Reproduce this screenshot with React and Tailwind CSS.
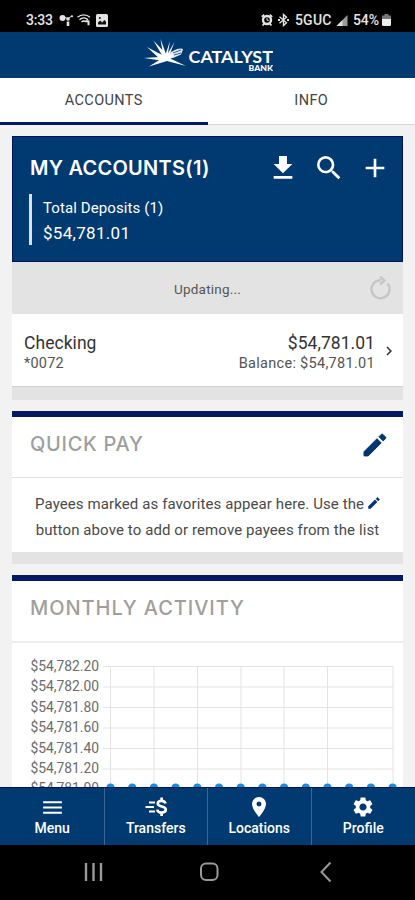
import React, { useState } from 'react';
import {
  MdAdd,
  MdChevronRight,
  MdFileDownload,
  MdLocationOn,
  MdMenu,
  MdSearch,
  MdSettings,
} from 'react-icons/md';

const gridRows = [
  { label: '$54,782.20', y: 23.5 },
  { label: '$54,782.00', y: 44 },
  { label: '$54,781.80', y: 64.5 },
  { label: '$54,781.60', y: 85 },
  { label: '$54,781.40', y: 105.5 },
  { label: '$54,781.20', y: 126 },
  { label: '$54,781.00', y: 146 },
];

const gridCols = [98.5, 142, 185.5, 229, 272, 315.5, 381];

const StatusBar = () => (
  <div className="h-8 shrink-0 bg-black text-[#e4e4e4] flex items-center justify-between pt-2 pl-[26px] pr-6">
    <div className="flex items-center">
      <span className="w-[27px] text-[14px] leading-4 font-medium tracking-[-0.2px]">
        3:33
      </span>
      <svg className="ml-1.5 w-3.5 h-3" viewBox="0 0 14 12" fill="currentColor">
        <circle cx="3.5" cy="4" r="3" />
        <circle cx="9" cy="5" r="1.8" />
        <circle cx="13" cy="2.2" r="1" />
        <path d="M6 3.5l3 1 4-2.6" stroke="currentColor" fill="none" />
        <rect x="7.7" y="7.5" width="2.6" height="4.5" />
      </svg>
      <svg
        className="ml-1 w-3.5 h-3"
        viewBox="0 0 14 12"
        fill="none"
        stroke="currentColor"
        strokeWidth="1.4"
      >
        <path d="M0.5 3.3C4 0 9.5 0 13 3.3M2.5 5.7C5 3.3 8.5 3.3 11 5.7M4.5 8c1.5-1.4 3-1.4 4.4 0" />
        <path d="M8.5 7l3 .4v3.8" strokeWidth="2" />
      </svg>
      <svg className="ml-[5px] w-3 h-[13px]" viewBox="0 0 12 13">
        <rect width="12" height="13" rx="1.5" fill="currentColor" />
        <path d="M2 10.5V8.6l2.2-2 2 1.8L8.4 6 10 7.8v2.7z" fill="#111" />
        <circle cx="3.8" cy="4" r="1" fill="#111" />
      </svg>
    </div>
    <div className="flex items-center">
      <svg
        className="w-3 h-3.5"
        viewBox="0 0 12 14"
        fill="none"
        stroke="currentColor"
      >
        <circle cx="6" cy="7" r="4" strokeWidth="2.4" />
        <path
          d="M.8 3.8L3.2 1.6M11.2 3.8L8.8 1.6M1.6 12.5l1.6-1.8M10.4 12.5l-1.6-1.8"
          strokeWidth="1.8"
        />
        <path d="M6 5v2.3h1.8" strokeWidth="1" />
      </svg>
      <svg
        className="ml-[5px] w-[11px] h-3.5"
        viewBox="0 0 11 14"
        fill="none"
        stroke="currentColor"
        strokeWidth="1.4"
      >
        <path d="M1.5 3.8l7 6-3 2.7v-11l3 2.7-7 6" />
        <path d="M0 7h2M9 7h2" strokeWidth="1.8" />
      </svg>
      <span className="ml-[6px] w-[38px] whitespace-nowrap text-[14px] leading-4 font-medium [word-spacing:-3px]">
        5G UC
      </span>
      <svg className="ml-[3px] w-3 h-[11px]" viewBox="0 0 11 11">
        <path d="M11 0v11H0z" fill="#999" />
        <path d="M6 5v6H0z" fill="#ddd" />
      </svg>
      <span className="ml-[5px] w-[27px] text-[14px] leading-4 font-medium tracking-[-0.1px]">
        54%
      </span>
      <svg className="ml-0.5 w-[9px] h-3" viewBox="0 0 9 12">
        <path d="M2.5 0h4v1.5H9V6H0V1.5h2.5z" fill="#777" />
        <path d="M0 5h9v5.5Q9 12 7.5 12h-6Q0 12 0 10.5z" fill="#eee" />
      </svg>
    </div>
  </div>
);

const Header = () => (
  <header className="h-[46px] shrink-0 bg-[#003a70] flex justify-center">
    <svg className="w-[130px] h-[46px]" viewBox="0 0 130 46">
      <g fill="#fff">
        <path d="M1 26l22-1.5L43 34l-19-5L6 34.5l10-6.2z" />
        <path d="M4 15l17 9-3 4zM10.5 8.5L24 23l-4 2zM17.5 7l5.5 15h-3zM27 9l-2.5 15H22zM31.5 10L26 24l-2-1z" />
        <path d="M24 23q5-4 9-5.5q6-2 7 0l-2 5-8 3.5-8 1z" opacity=".9" />
        <path d="M17 23h13l-4 6h-9z" />
      </g>
      <path d="M30 21l8-3M31 23l7-2" stroke="#003a70" strokeWidth=".8" />
      <text
        x="45.5"
        y="31"
        fill="#fff"
        fontFamily="Lato, sans-serif"
        fontSize="17.5"
        fontWeight="700"
        textLength="84.5"
        lengthAdjust="spacingAndGlyphs"
      >
        CATALYST
      </text>
      <text
        x="105.5"
        y="38.5"
        fill="#fff"
        fontFamily="Lato, sans-serif"
        fontSize="8"
        fontWeight="900"
        textLength="24.5"
        lengthAdjust="spacingAndGlyphs"
      >
        BANK
      </text>
    </svg>
  </header>
);

const Tabs = ({ tab, setTab }) => (
  <div className="h-[47px] shrink-0 grid grid-cols-2 bg-white text-[14.5px] text-[#444]">
    <button
      onClick={() => setTab('accounts')}
      className={
        tab === 'accounts'
          ? 'border-b-[3px] border-[#051a60] pt-0.5'
          : 'border-b border-[#d8d8d8]'
      }
    >
      <span className="tracking-[0.4px]">ACCOUNTS</span>
    </button>
    <button
      onClick={() => setTab('info')}
      className={
        tab === 'info'
          ? 'border-b-[3px] border-[#051a60] pt-0.5'
          : 'border-b border-[#d8d8d8]'
      }
    >
      <span className="tracking-[0.4px]">INFO</span>
    </button>
  </div>
);

const PencilIcon = ({ className }) => (
  <svg
    className={className}
    viewBox="0 0 24 24"
    fill="currentColor"
    stroke="currentColor"
    strokeWidth="1"
    strokeLinejoin="round"
  >
    <path d="M1 18.7L14 5.7l4.2 4.2L5.2 22.9H1z" />
    <path d="M16 3.7l2.3-2.3q.8-.7 1.6 0l2.6 2.6q.7.8 0 1.6l-2.3 2.3z" />
  </svg>
);

const AccountsCard = () => (
  <section className="h-[264px] shrink-0 bg-white border-b-[13px] border-[#e3e3e3]">
    <div className="h-[126px] bg-[#003a70] border border-[#00145c] text-white pl-4 pr-[11px] pt-[15px]">
      <div className="flex items-center justify-between h-8">
        <h2 className="font-['Inter'] font-semibold text-[20px] leading-8 tracking-[0.25px] whitespace-nowrap pl-px">
          MY ACCOUNTS(1)
        </h2>
        <div className="flex gap-3.5">
          <MdFileDownload size={32} />
          <MdSearch size={32} />
          <MdAdd size={32} />
        </div>
      </div>
      <div className="mt-[10px] h-[51px] border-l-[3px] border-[#dddff0] pl-[11px] pt-0.5">
        <p className="text-[15px] leading-6 tracking-[0.1px]">
          Total Deposits (1)
        </p>
        <p className="text-[17px] leading-[26px] tracking-[0.3px]">$54,781.01</p>
      </div>
    </div>
    <div className="h-[52px] bg-[#e3e3e3] grid grid-cols-[1fr_auto_1fr] items-center">
      <span className="col-start-2 text-[13.5px] text-[#555] pt-0.5 tracking-[0.2px]">
        Updating...
      </span>
      <svg
        className="justify-self-end mr-3 w-[22px] h-6"
        viewBox="0 0 22 24"
        fill="none"
        stroke="#c6c6c6"
        strokeWidth="2.4"
      >
        <path d="M12 4.2A9 9 0 1 0 18.5 7.5" />
        <path d="M11 .5L15.5 4.5 11 8.5" />
      </svg>
    </div>
    <div className="h-[73px] flex items-center border-b border-[#cfcfcf] pl-3 pr-[5px] pt-1.5">
      <div className="flex-1">
        <p className="text-[17.5px] leading-[21px] tracking-[0.05px] text-[#333]">
          Checking
        </p>
        <p className="text-[14.5px] leading-[19px] tracking-[0.2px] text-[#555]">
          *0072
        </p>
      </div>
      <div className="text-right">
        <p className="text-[17.5px] leading-[21px] tracking-[0.05px] text-[#333]">
          $54,781.01
        </p>
        <p className="text-[14.5px] leading-[19px] tracking-[0.3px] text-[#555]">
          Balance: $54,781.01
        </p>
      </div>
      <MdChevronRight size={18} className="ml-[5px] -mt-1 text-[#333]" />
    </div>
  </section>
);

const QuickPay = () => (
  <section className="mt-[11px] h-[153px] shrink-0 bg-white border-t-[6px] border-t-[#051a60] border-b-[12px] border-b-[#e3e3e3]">
    <div className="h-[61px] flex items-center justify-between pl-[18px] pr-4 pb-1.5 border-b border-[#e0e0e0]">
      <h2 className="font-['Inter'] font-medium text-[20px] tracking-[0.7px] text-[#9f9f9f]">
        QUICK PAY
      </h2>
      <PencilIcon className="w-6 h-6 mt-0.5 text-[#003470]" />
    </div>
    <p className="pt-[14px] text-center text-[15px] leading-[25.5px] tracking-[0.1px] text-[#4a4a4a] whitespace-nowrap">
      Payees marked as favorites appear here. Use the{' '}
      <PencilIcon className="inline w-3 h-3 -mt-1 text-[#003470]" />
      <br />
      button above to add or remove payees from the list
    </p>
  </section>
);

const MonthlyActivity = () => (
  <section className="mt-[11px] shrink-0 bg-white border-t-[6px] border-[#051a60]">
    <h2 className="h-[62px] pl-[18px] pt-[11px] leading-8 border-b-2 border-[#ececec] font-['Inter'] font-medium text-[20px] tracking-[0.95px] text-[#9f9f9f]">
      MONTHLY ACTIVITY
    </h2>
    <svg className="block w-[391px] h-40" viewBox="0 0 391 160">
      {gridRows.map((row) => (
        <g key={row.label}>
          <path d={`M91 ${row.y}H381`} stroke="#e3e3e3" />
          <text
            x="18.5"
            y={row.y + 4}
            fontSize="14"
            fill="#6c6c6c"
            textLength="68.5"
            lengthAdjust="spacingAndGlyphs"
          >
            {row.label}
          </text>
        </g>
      ))}
      {gridCols.map((x) => (
        <path key={x} d={`M${x} 23.5V146`} stroke="#e3e3e3" />
      ))}
      {[...Array(14)].map((_, i) => (
        <circle key={i} cx={98.5 + i * 21.7} cy="144.5" r="4" fill="#1590d8" />
      ))}
    </svg>
  </section>
);

const TransferIcon = () => (
  <svg className="w-6 h-6" viewBox="0 0 24 24" fill="none" stroke="#fff">
    <path d="M5 7.5h6M1.5 12h8.5M5 16.5h6" strokeWidth="2.2" />
    <path
      d="M21.500 8.500C21 6.700 19.500 5.800 17.500 5.800c-2.300 0-3.700 1-3.700 2.700 0 4 8 2 8 6.100 0 1.900-1.700 3-4.200 3-2.300 0-4-1-4.300-3M17.600 2.500v3.500M17.600 17.500V21"
      strokeWidth="2.7"
    />
  </svg>
);

const BottomNav = () => {
  const items = [
    { label: 'Menu', icon: <MdMenu size={25} /> },
    { label: 'Transfers', icon: <TransferIcon /> },
    { label: 'Locations', icon: <MdLocationOn size={24} /> },
    { label: 'Profile', icon: <MdSettings size={24} /> },
  ];

  return (
    <nav className="h-[58px] shrink-0 grid grid-cols-4 pl-px bg-[#003a70] border-t border-[#00145c] text-white">
      {items.map((item) => (
        <button
          key={item.label}
          className="flex flex-col items-center pt-[7px] border-r border-[#3d6690] last:border-r-0"
        >
          <span className="h-6 flex items-center">{item.icon}</span>
          <span className="text-[14px] leading-[18px] font-medium">
            {item.label}
          </span>
        </button>
      ))}
    </nav>
  );
};

const SystemNav = () => (
  <div className="h-[55px] shrink-0 bg-black flex">
    <svg
      className="w-[415px] h-[55px]"
      viewBox="0 0 415 55"
      fill="none"
      stroke="#999"
      strokeWidth="2"
    >
      <path d="M86 18v18M93.5 18v18M101 18v18" strokeWidth="2.4" />
      <rect x="201" y="18.5" width="16.5" height="16.5" rx="5" />
      <path d="M330.5 17.5L321.5 27l9 9.5" />
    </svg>
  </div>
);

const App = () => {
  const [tab, setTab] = useState('accounts');

  return (
    <div className="w-[415px] h-[900px] flex flex-col overflow-hidden bg-[#f2f2f2] font-['Roboto',sans-serif]">
      <StatusBar />
      <Header />
      <Tabs tab={tab} setTab={setTab} />
      <main className="flex-1 min-h-0 overflow-hidden flex flex-col pt-[11px] px-3">
        <AccountsCard />
        <QuickPay />
        <MonthlyActivity />
      </main>
      <BottomNav />
      <SystemNav />
    </div>
  );
};

export default App;
